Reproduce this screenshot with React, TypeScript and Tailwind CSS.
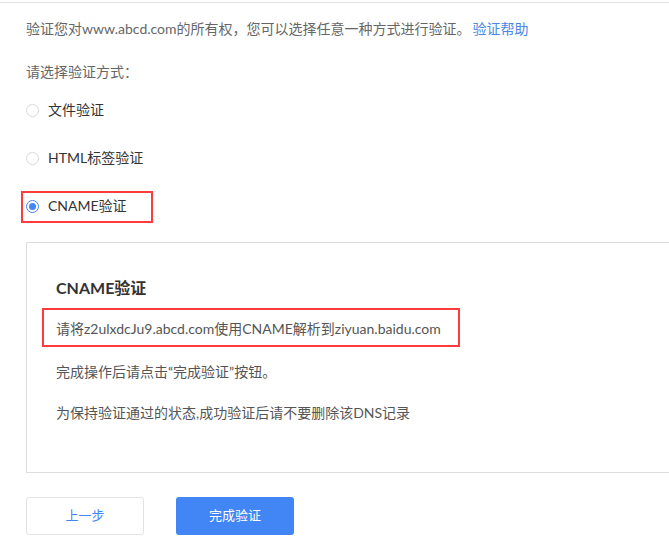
import React from "react";

const font = { fontFamily: 'Lato, "Noto Sans CJK SC", sans-serif' };

function Radio({ checked }: { checked?: boolean }) {
  return checked ? (
    <span className="flex h-[13px] w-[13px] items-center justify-center rounded-full border border-[#4285f4] bg-white">
      <span className="h-[7px] w-[7px] rounded-full bg-[#4285f4]" />
    </span>
  ) : (
    <span className="h-[13px] w-[13px] rounded-full border border-[#d9d9d9] bg-white" />
  );
}

function Option({ label, checked, boxed }: { label: string; checked?: boolean; boxed?: boolean }) {
  return (
    <div className="relative flex h-[20px] items-center gap-[9px]">
      <Radio checked={checked} />
      <span className="text-[14px] leading-[20px] text-[#333]">{label}</span>
      {boxed && (
        <span className="absolute left-[-5px] top-[-5px] h-[32px] w-[132px] border-2 border-[#ff3b3b]" />
      )}
    </div>
  );
}

export default function App() {
  return (
    <div className="h-[548px] w-[669px] overflow-hidden bg-white" style={font}>
      <div className="mt-[2px] h-px w-full bg-[#e3e3e3]" />
      <div className="pl-[26px] pt-[16px]">
        <p className="text-[14px] leading-[20px] text-[#666]">
          验证您对www.abcd.com的所有权，您可以选择任意一种方式进行验证。
          <span className="ml-[2px] text-[#4a86e8]">验证帮助</span>
        </p>
        <p className="mt-[23px] text-[14px] leading-[20px] text-[#666]">请选择验证方式：</p>
        <div className="mt-[18px] flex flex-col gap-[28px]">
          <Option label="文件验证" />
          <Option label="HTML标签验证" />
          <Option label="CNAME验证" checked boxed />
        </div>
        <div className="mt-[26px] h-[231px] border-y border-l border-[#dedede] pl-[29px] pt-[34px]">
          <h3 className="text-[16px] font-bold leading-[22px] text-[#333]">CNAME验证</h3>
          <div className="relative mt-[20px] text-[14px] leading-[20px] text-[#555]">
            请将z2ulxdcJu9.abcd.com使用CNAME解析到ziyuan.baidu.com
            <span className="absolute left-[-14px] top-[-11px] h-[39px] w-[418px] border-2 border-[#ff3b3b]" />
          </div>
          <p className="mt-[23px] text-[14px] leading-[20px] text-[#555]">完成操作后请点击“完成验证”按钮。</p>
          <p className="mt-[21px] text-[14px] leading-[20px] text-[#555]">为保持验证通过的状态,成功验证后请不要删除该DNS记录</p>
        </div>
        <div className="mt-[24px] flex gap-[32px]">
          <button className="h-[38px] w-[118px] rounded-[3px] border border-[#e3e3e3] bg-white text-[13px] text-[#4285f4]">
            上一步
          </button>
          <button className="h-[38px] w-[118px] rounded-[3px] bg-[#4285f4] text-[13px] text-white">
            完成验证
          </button>
        </div>
      </div>
    </div>
  );
}
